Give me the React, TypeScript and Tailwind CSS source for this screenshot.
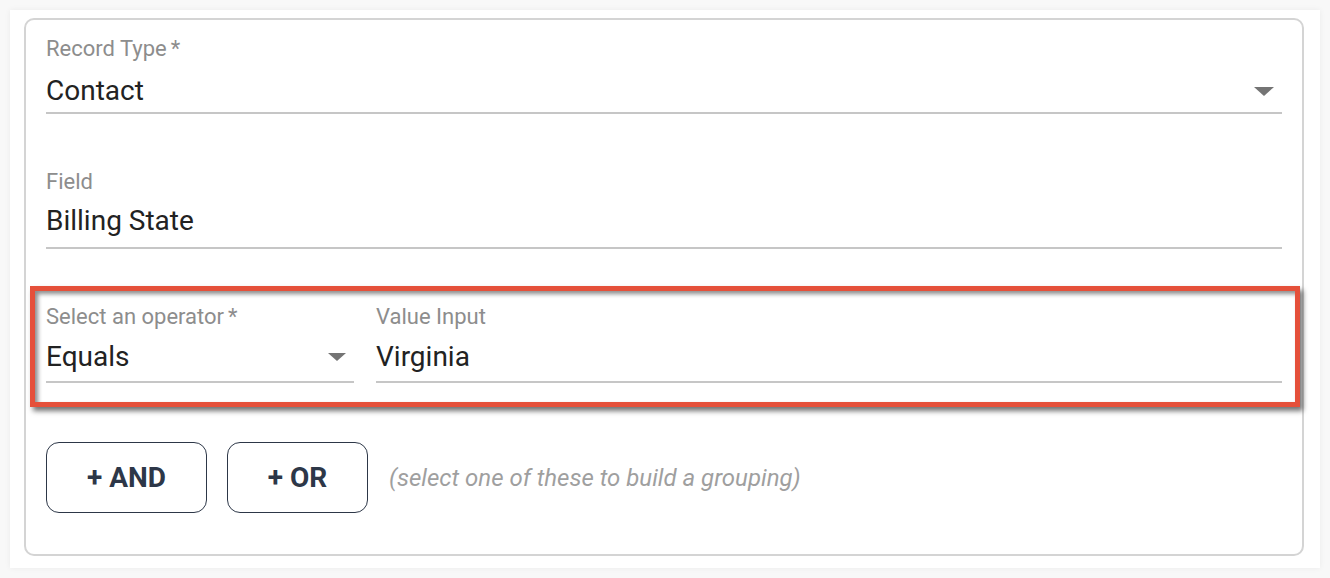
import React from 'react';

const Caret = ({ w, h }: { w: number; h: number }) => (
    <svg width={w} height={h} viewBox="0 0 20 10" preserveAspectRatio="none" className="shrink-0">
        <path d="M0 0 L20 0 L10 10 Z" fill="#747474" />
    </svg>
);

interface FieldProps {
    label: string;
    value: string;
    required?: boolean;
    select?: boolean;
    caretW?: number;
    caretH?: number;
    className?: string;
    valueGap?: string;
    underGap?: string;
}

const Field: React.FC<FieldProps> = ({ label, value, required, select, caretW = 20, caretH = 9, className = '', valueGap = 'mt-[10px]', underGap = 'pb-[7px]' }) => {
    return (
        <div className={`flex flex-col ${className}`}>
            <div className="text-[22px] leading-[26px] text-[#8d8d8d]">
                {label}
                {required && <span className="ml-[4px]">*</span>}
            </div>
            <div className={`flex items-center justify-between border-b-2 border-[#c6c6c6] ${valueGap} ${underGap}`}>
                <span className="text-[28px] leading-[34px] text-[#222222]">{value}</span>
                {select && (
                    <span className="mr-[8px]">
                        <Caret w={caretW} h={caretH} />
                    </span>
                )}
            </div>
        </div>
    );
};

export default function App() {
    return (
        <div className="w-[1330px] h-[578px] bg-[#f8f8f8] p-[10px]" style={{ fontFamily: 'Roboto, "Liberation Sans", sans-serif' }}>
            <div className="h-[558px] bg-white pl-[14px] pr-[16px] pt-[8px] shadow-[0_0_6px_rgba(0,0,0,0.06)]">
                <div className="h-[538px] border-2 border-[#d4d4d4] rounded-[10px] px-[20px] pt-[16px]">
                    <Field label="Record Type" required value="Contact" select valueGap="mt-[12px]" underGap="pb-[4px]" />

                    <Field label="Field" value="Billing State" className="mt-[55px]" valueGap="mt-[9px]" underGap="pb-[9px]" />

                    <div className="relative mt-[55px]">
                        <div className="absolute -left-[16px] -right-[18px] -top-[18px] -bottom-[24px] border-[5px] border-[#e5503a] shadow-[3px_4px_5px_rgba(0,0,0,0.55),inset_3px_3px_4px_rgba(0,0,0,0.45)] pointer-events-none" />
                        <div className="flex gap-[22px]">
                            <Field label="Select an operator" required value="Equals" select caretW={18} caretH={8} className="w-[308px]" valueGap="mt-[10px]" underGap="pb-[7px]" />
                            <Field label="Value Input" value="Virginia" className="flex-1" valueGap="mt-[10px]" underGap="pb-[7px]" />
                        </div>
                    </div>

                    <div className="flex items-center mt-[59px]">
                        <button className="w-[161px] h-[71px] rounded-[13px] border border-[#2d3748] text-[28px] font-bold text-[#2d3748]">
                            + AND
                        </button>
                        <button className="ml-[20px] w-[141px] h-[71px] rounded-[13px] border border-[#2d3748] text-[28px] font-bold text-[#2d3748]">
                            + OR
                        </button>
                        <span className="ml-[21px] text-[24px] italic text-[#9f9f9f]">
                            (select one of these to build a grouping)
                        </span>
                    </div>
                </div>
            </div>
        </div>
    );
}
